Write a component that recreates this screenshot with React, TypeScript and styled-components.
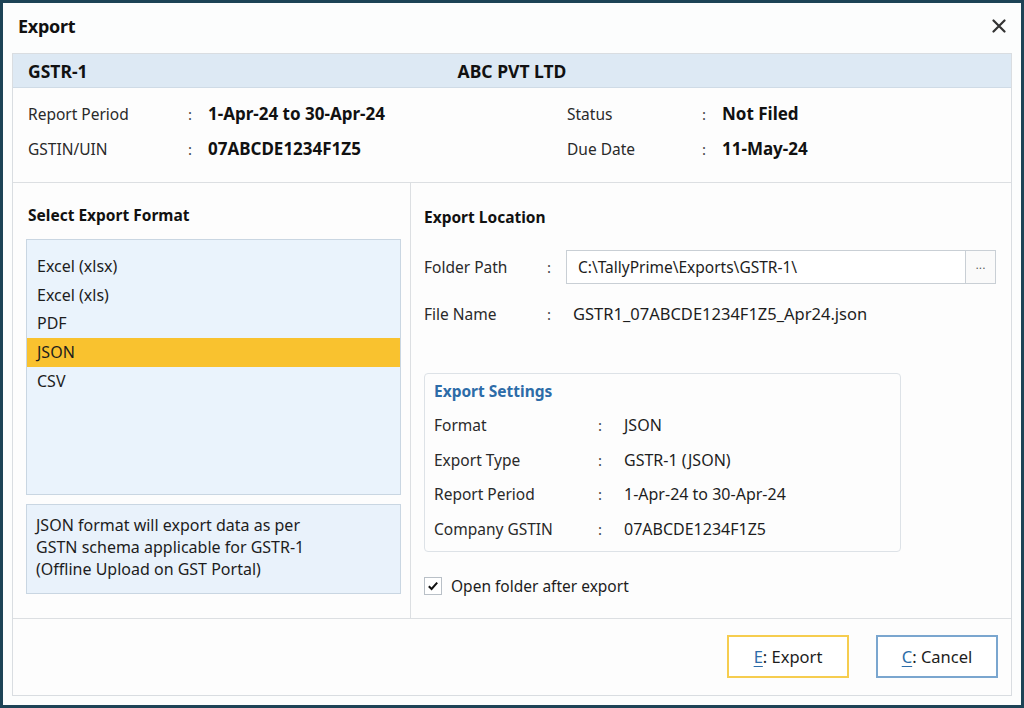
import styled, { createGlobalStyle } from "styled-components";

const GlobalStyle = createGlobalStyle`
  html, body {
    margin: 0;
    padding: 0;
    background: #ffffff;
  }
  body {
    font-family: "Noto Sans", "Open Sans", Arial, sans-serif;
    color: #1d1d1d;
  }
  * { box-sizing: border-box; }
`;

const Window = styled.div`
  width: 1024px;
  height: 708px;
  border: 3px solid #1d4356;
  background: #fcfdfd;
  display: flex;
  flex-direction: column;
`;

const TitleBar = styled.div`
  height: 51px;
  display: flex;
  align-items: center;
  justify-content: space-between;
  padding: 0 12px 4px 15px;
`;

const Title = styled.h1`
  margin: 0;
  font-size: 18px;
  font-weight: 700;
  letter-spacing: -0.3px;
  color: #111;
`;

const CloseBtn = styled.button`
  border: none;
  background: none;
  padding: 0;
  width: 20px;
  height: 20px;
  display: flex;
  align-items: center;
  justify-content: center;
  cursor: pointer;
`;

const Panel = styled.div`
  flex: 1;
  margin: 0 9px 9px 9px;
  border: 1px solid #d9dde1;
  background: #fdfdfd;
  display: flex;
  flex-direction: column;
`;

const HeaderStrip = styled.div`
  height: 34px;
  background: #dde9f4;
  border-bottom: 1px solid #cfdbe6;
  display: grid;
  grid-template-columns: 1fr auto 1fr;
  align-items: center;
  padding: 0 15px;
  font-size: 17.5px;
  font-weight: 700;
  color: #111;
`;

const InfoSection = styled.div`
  height: 95px;
  border-bottom: 1px solid #dcdfe2;
  display: grid;
  grid-template-columns: 539px 1fr;
  padding: 8px 15px 0 15px;
`;

const InfoCol = styled.div`
  display: flex;
  flex-direction: column;
`;

const InfoRow = styled.div<{ $labelW: number }>`
  height: 35px;
  display: grid;
  grid-template-columns: ${p => p.$labelW}px 20px 1fr;
  align-items: center;
`;

const Label = styled.span`
  color: #2a2a2a;
  font-size: 15.5px;
`;

const Colon = styled.span`
  color: #444;
  font-size: 15px;
`;

const BoldValue = styled.span`
  font-size: 17px;
  font-weight: 700;
  color: #111;
`;

const Main = styled.div`
  flex: 1;
  display: grid;
  grid-template-columns: 398px 1fr;
  border-bottom: 1px solid #dcdfe2;
`;

const LeftCol = styled.div`
  border-right: 1px solid #dcdfe2;
  padding: 21px 9px 24px 13px;
  display: flex;
  flex-direction: column;
`;

const SectionTitle = styled.div<{ $indent?: number }>`
  font-size: 15.5px;
  font-weight: 700;
  color: #111;
  padding-left: ${p => p.$indent ?? 0}px;
  line-height: 22px;
`;

const FormatList = styled.ul`
  list-style: none;
  margin: 13px 0 0 0;
  padding: 12px 0 0 0;
  height: 256px;
  background: #eaf3fc;
  border: 1px solid #c9d6e2;
`;

const FormatItem = styled.li<{ $selected?: boolean }>`
  height: 28.7px;
  line-height: 28.7px;
  padding-left: 10px;
  font-size: 16px;
  color: #1d1d1d;
  background: ${p => (p.$selected ? "#f9c22f" : "transparent")};
`;

const Description = styled.div`
  margin-top: 9px;
  height: 90px;
  background: #e9f2fb;
  border: 1px solid #c9d6e2;
  padding: 9px 9px;
  font-size: 16px;
  line-height: 22px;
  color: #1d1d1d;
`;

const RightCol = styled.div`
  padding: 23px 15px 0 13px;
  display: flex;
  flex-direction: column;
`;

const FieldRow = styled.div<{ $mt: number }>`
  margin-top: ${p => p.$mt}px;
  display: grid;
  grid-template-columns: 123px 19px 1fr;
  align-items: center;
`;

const PathBox = styled.div`
  height: 34px;
  border: 1px solid #c9cfd5;
  background: #fff;
  display: flex;
  align-items: stretch;
`;

const PathText = styled.div`
  flex: 1;
  display: flex;
  align-items: center;
  padding-left: 11px;
  font-size: 15.5px;
  color: #1d1d1d;
`;

const BrowseBtn = styled.button`
  width: 30px;
  border: none;
  border-left: 1px solid #c9cfd5;
  background: #fafafa;
  font-size: 12px;
  color: #555;
  padding: 0 0 4px 0;
  cursor: pointer;
`;

const FileValue = styled.span`
  padding-left: 7px;
  font-size: 16.5px;
  color: #1d1d1d;
`;

const SettingsBox = styled.div`
  margin-top: 48px;
  width: 477px;
  height: 179px;
  border: 1px solid #dde2e7;
  border-radius: 4px;
  background: #fdfdfd;
  padding: 6px 9px 0 9px;
`;

const SettingsTitle = styled.div`
  font-size: 15.5px;
  font-weight: 700;
  color: #2d6ca8;
  line-height: 22px;
  margin-bottom: 6px;
`;

const SettingRow = styled.div`
  height: 34.5px;
  display: grid;
  grid-template-columns: 164px 26px 1fr;
  align-items: center;
  color: #1d1d1d;
`;

const SettingValue = styled.span`
  font-size: 16px;
`;

const CheckRow = styled.label`
  margin-top: 23px;
  display: flex;
  align-items: center;
  gap: 9px;
  font-size: 15.5px;
  color: #1d1d1d;
`;

const CheckBox = styled.span`
  width: 18px;
  height: 18px;
  border: 1px solid #b9c0c7;
  background: #fff;
  display: flex;
  align-items: center;
  justify-content: center;
`;

const Footer = styled.div`
  height: 76px;
  display: flex;
  align-items: center;
  justify-content: flex-end;
  gap: 27px;
  padding: 0 13px 1px 0;
`;

const ActionButton = styled.button<{ $primary?: boolean }>`
  width: 122px;
  height: 43px;
  background: #fff;
  border: 2px solid ${p => (p.$primary ? "#f6cd4f" : "#7aa6cf")};
  font-family: inherit;
  font-size: 16.5px;
  color: #1d1d1d;
  cursor: pointer;
  u {
    color: #2d6ca8;
    text-decoration-thickness: 1px;
    text-underline-offset: 3px;
  }
`;

const formats = ["Excel (xlsx)", "Excel (xls)", "PDF", "JSON", "CSV"];

const settings = [
  ["Format", "JSON"],
  ["Export Type", "GSTR-1 (JSON)"],
  ["Report Period", "1-Apr-24 to 30-Apr-24"],
  ["Company GSTIN", "07ABCDE1234F1Z5"],
];

export default function App() {
  return (
    <>
      <GlobalStyle />
      <Window>
        <TitleBar>
          <Title>Export</Title>
          <CloseBtn aria-label="Close">
            <svg width="14" height="14" viewBox="0 0 14 14">
              <path d="M1.5 1.5 L12.5 12.5 M12.5 1.5 L1.5 12.5" stroke="#333" strokeWidth="2.2" strokeLinecap="round" />
            </svg>
          </CloseBtn>
        </TitleBar>
        <Panel>
          <HeaderStrip>
            <span>GSTR-1</span>
            <span>ABC PVT LTD</span>
            <span />
          </HeaderStrip>
          <InfoSection>
            <InfoCol>
              <InfoRow $labelW={160}>
                <Label>Report Period</Label>
                <Colon>:</Colon>
                <BoldValue>1-Apr-24 to 30-Apr-24</BoldValue>
              </InfoRow>
              <InfoRow $labelW={160}>
                <Label>GSTIN/UIN</Label>
                <Colon>:</Colon>
                <BoldValue>07ABCDE1234F1Z5</BoldValue>
              </InfoRow>
            </InfoCol>
            <InfoCol>
              <InfoRow $labelW={135}>
                <Label>Status</Label>
                <Colon>:</Colon>
                <BoldValue>Not Filed</BoldValue>
              </InfoRow>
              <InfoRow $labelW={135}>
                <Label>Due Date</Label>
                <Colon>:</Colon>
                <BoldValue>11-May-24</BoldValue>
              </InfoRow>
            </InfoCol>
          </InfoSection>
          <Main>
            <LeftCol>
              <SectionTitle $indent={2}>Select Export Format</SectionTitle>
              <FormatList>
                {formats.map(f => (
                  <FormatItem key={f} $selected={f === "JSON"}>{f}</FormatItem>
                ))}
              </FormatList>
              <Description>
                JSON format will export data as per
                <br />
                GSTN schema applicable for GSTR-1
                <br />
                (Offline Upload on GST Portal)
              </Description>
            </LeftCol>
            <RightCol>
              <SectionTitle>Export Location</SectionTitle>
              <FieldRow $mt={22}>
                <Label>Folder Path</Label>
                <Colon>:</Colon>
                <PathBox>
                  <PathText>C:\TallyPrime\Exports\GSTR-1\</PathText>
                  <BrowseBtn>...</BrowseBtn>
                </PathBox>
              </FieldRow>
              <FieldRow $mt={18}>
                <Label>File Name</Label>
                <Colon>:</Colon>
                <FileValue>GSTR1_07ABCDE1234F1Z5_Apr24.json</FileValue>
              </FieldRow>
              <SettingsBox>
                <SettingsTitle>Export Settings</SettingsTitle>
                {settings.map(([k, v]) => (
                  <SettingRow key={k}>
                    <Label>{k}</Label>
                    <Colon>:</Colon>
                    <SettingValue>{v}</SettingValue>
                  </SettingRow>
                ))}
              </SettingsBox>
              <CheckRow>
                <CheckBox>
                  <svg width="12" height="12" viewBox="0 0 12 12">
                    <path d="M1.8 6.2 L4.6 9 L10.2 2.6" fill="none" stroke="#111" strokeWidth="2" />
                  </svg>
                </CheckBox>
                Open folder after export
              </CheckRow>
            </RightCol>
          </Main>
          <Footer>
            <ActionButton $primary>
              <u>E</u>: Export
            </ActionButton>
            <ActionButton>
              <u>C</u>: Cancel
            </ActionButton>
          </Footer>
        </Panel>
      </Window>
    </>
  );
}
